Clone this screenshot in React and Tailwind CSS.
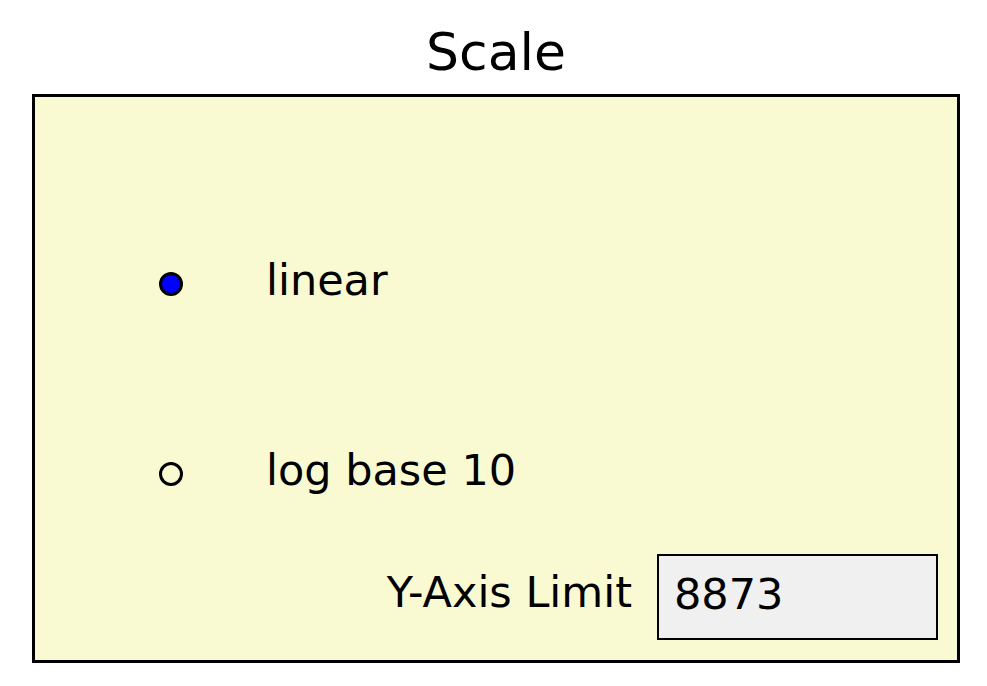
import { useState } from "react";

function Radio({ checked, label, onSelect }) {
  return (
    <button type="button" onClick={onSelect} className="flex h-[43px] items-start text-left">
      <span
        className={`mt-[13px] h-[24px] w-[24px] shrink-0 rounded-full border-[3px] border-black ${checked ? "bg-[#0000ff]" : "bg-transparent"}`}
      />
      <span className="ml-[83px] text-[43px] leading-[43px] text-black">{label}</span>
    </button>
  );
}

export default function App() {
  const [scale, setScale] = useState("linear");
  const [limit, setLimit] = useState("8873");

  return (
    <div className="h-[686px] w-[987px] overflow-hidden bg-white font-['DejaVu_Sans',sans-serif] text-black">
      <h1 className="mt-[26px] ml-[32px] w-[928px] text-center text-[52px] leading-[52px]">Scale</h1>

      <div className="mt-[16px] ml-[32px] flex h-[569px] w-[928px] flex-col border-[3px] border-black bg-[#fafad2]">
        <div className="mt-[162px] ml-[124px] flex flex-col gap-[147px]">
          <Radio checked={scale === "linear"} label="linear" onSelect={() => setScale("linear")} />
          <Radio checked={scale === "log"} label="log base 10" onSelect={() => setScale("log")} />
        </div>

        <div className="mt-[62px] mr-[19px] flex items-start justify-end">
          <span className="mt-[17px] mr-[25px] text-[43px] leading-[43px]">Y-Axis Limit</span>
          <div className="h-[86px] w-[281px] border-2 border-black bg-[#f0f0f0] pt-[13px] pl-[15px]">
            <input
              value={limit}
              onChange={(e) => setLimit(e.target.value)}
              className="w-full bg-transparent text-[43px] leading-[43px] outline-none"
            />
          </div>
        </div>
      </div>
    </div>
  );
}
